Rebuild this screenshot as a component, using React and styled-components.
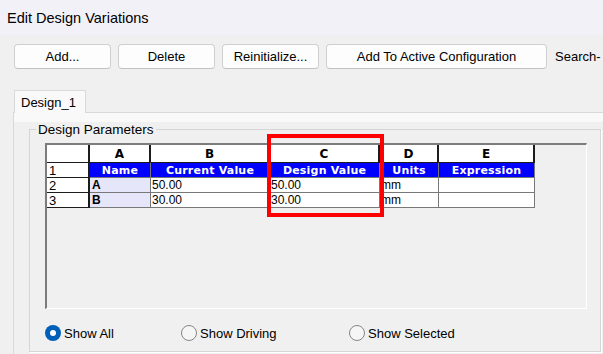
import React from "react";
import styled, { createGlobalStyle } from "styled-components";

const GlobalStyle = createGlobalStyle`
  html, body {
    margin: 0;
    padding: 0;
    background: #f0f0f0;
  }
  body {
    font-family: "Liberation Sans", Arial, sans-serif;
    color: #000;
    overflow: hidden;
  }
  * {
    box-sizing: border-box;
  }
`;

const Window = styled.div`
  width: 603px;
  height: 354px;
  background: #f0f0f0;
  overflow: hidden;
`;

const TitleBar = styled.div`
  height: 35px;
  background: #f3f1f8;
  display: flex;
  align-items: center;
  padding-left: 7px;
  font-size: 14.5px;
`;

const Toolbar = styled.div`
  display: flex;
  align-items: center;
  gap: 7px;
  padding: 9px 0 0 14px;
  white-space: nowrap;
`;

const Button = styled.button`
  width: ${(p) => p.$w}px;
  height: 25px;
  padding: 0;
  background: #fdfdfd;
  border: 1px solid #d0d0d0;
  border-bottom-color: #c2c2c2;
  border-radius: 4px;
  font-family: "Liberation Sans", Arial, sans-serif;
  font-size: 13px;
  color: #000;
`;

const SearchLabel = styled.span`
  margin-left: 1px;
  font-size: 13px;
`;

const TabStrip = styled.div`
  margin-top: 21px;
  padding-left: 14px;
  display: flex;
`;

const Tab = styled.div`
  position: relative;
  z-index: 1;
  width: 72px;
  height: 23px;
  margin-bottom: -1px;
  padding-left: 6px;
  display: flex;
  align-items: center;
  background: #f9f9f9;
  border: 1px solid #d9d9d9;
  border-bottom: none;
  font-size: 13px;
`;

const TabPage = styled.div`
  margin-left: 13px;
  padding-top: 9px;
  background: #f9f9f9;
  border-top: 1px solid #d9d9d9;
  border-left: 1px solid #d9d9d9;
`;

const PageBody = styled.div`
  background: #f0f0f0;
  padding-left: 15px;
  height: 240px;
`;

const GroupBox = styled.fieldset`
  margin: 0;
  padding: 0;
  width: 572px;
  border: 1px solid #d5d5d5;
  box-shadow: 1px 1px 0 #ffffff;
  min-inline-size: 0;
`;

const GroupTitle = styled.legend`
  margin-left: 6px;
  padding: 0 2px;
  font-size: 13.5px;
  line-height: 15px;
`;

const GroupContent = styled.div`
  padding: 6px 13px 10px 15px;
`;

const SheetFrame = styled.div`
  position: relative;
  width: 542px;
  height: 166px;
  background: #f0f0f0;
  border-top: 2px solid #7c7c7c;
  border-left: 2px solid #7c7c7c;
  border-right: 1px solid #ffffff;
  border-bottom: 1px solid #ffffff;
`;

const Sheet = styled.div`
  display: grid;
  grid-template-columns: 43px 61px 119px 110px 59px 96px;
  grid-template-rows: 18px 15px 15px 15px;
  width: 488px;
`;

const Cell = styled.div`
  display: flex;
  align-items: center;
  overflow: hidden;
  white-space: nowrap;
  padding-left: 1px;
  font-size: 12px;
  line-height: 1;
  background: #ffffff;
  border-right: 1px solid #787878;
  border-bottom: 1px solid #787878;
`;

const HeadCell = styled(Cell)`
  justify-content: ${(p) => (p.$left ? "flex-start" : "center")};
  padding-left: ${(p) => (p.$left ? "2px" : "0")};
  font-family: ${(p) =>
    p.$left ? '"Liberation Sans", Arial, sans-serif' : '"DejaVu Sans", sans-serif'};
  font-weight: ${(p) => (p.$left ? 400 : 700)};
  font-size: ${(p) => (p.$left ? "13px" : "12px")};
  border-right: 2px solid #1c1c1c;
  border-bottom: 1px solid #1c1c1c;
`;

const TitleCell = styled(Cell)`
  justify-content: center;
  padding-left: 0;
  background: #0000ff;
  color: #ffffff;
  font-family: "DejaVu Sans", sans-serif;
  font-weight: 700;
  font-size: 11px;
  letter-spacing: 0.2px;
`;

const NameCell = styled(Cell)`
  background: #e6e6fa;
  font-weight: 700;
  padding-left: 2px;
`;

const Highlight = styled.div`
  position: absolute;
  left: 220px;
  top: -11px;
  width: 117px;
  height: 83px;
  border: 4px solid #ff0000;
  pointer-events: none;
`;

const RadioRow = styled.div`
  display: flex;
  align-items: center;
  height: 16px;
  margin-top: 16px;
`;

const RadioItem = styled.label`
  display: flex;
  align-items: center;
  gap: 3px;
  width: ${(p) => (p.$w ? `${p.$w}px` : "auto")};
  font-size: 13px;
`;

const RadioDot = styled.span`
  position: relative;
  width: 16px;
  height: 16px;
  border-radius: 50%;
  background: ${(p) => (p.$on ? "#005fb8" : "#f6f6f6")};
  border: ${(p) => (p.$on ? "none" : "1px solid #858585")};
  &::after {
    content: "";
    display: ${(p) => (p.$on ? "block" : "none")};
    position: absolute;
    left: 5px;
    top: 5px;
    width: 6px;
    height: 6px;
    border-radius: 50%;
    background: #ffffff;
  }
`;

const columns = ["A", "B", "C", "D", "E"];
const titles = ["Name", "Current Value", "Design Value", "Units", "Expression"];
const rows = [
  { name: "A", current: "50.00", design: "50.00", units: "mm", expr: "" },
  { name: "B", current: "30.00", design: "30.00", units: "mm", expr: "" },
];

export default function App() {
  return (
    <Window>
      <GlobalStyle />
      <TitleBar>Edit Design Variations</TitleBar>
      <Toolbar>
        <Button $w={97}>Add...</Button>
        <Button $w={97}>Delete</Button>
        <Button $w={97}>Reinitialize...</Button>
        <Button $w={221}>Add To Active Configuration</Button>
        <SearchLabel>Search-</SearchLabel>
      </Toolbar>
      <TabStrip>
        <Tab>Design_1</Tab>
      </TabStrip>
      <TabPage>
        <PageBody>
          <GroupBox>
            <GroupTitle>Design Parameters</GroupTitle>
            <GroupContent>
              <SheetFrame>
                <Sheet>
                  <HeadCell />
                  {columns.map((c) => (
                    <HeadCell key={c}>{c}</HeadCell>
                  ))}
                  <HeadCell $left>1</HeadCell>
                  {titles.map((t) => (
                    <TitleCell key={t}>{t}</TitleCell>
                  ))}
                  {rows.map((r, i) => (
                    <React.Fragment key={r.name}>
                      <HeadCell $left>{i + 2}</HeadCell>
                      <NameCell>{r.name}</NameCell>
                      <Cell>{r.current}</Cell>
                      <Cell>{r.design}</Cell>
                      <Cell>{r.units}</Cell>
                      <Cell>{r.expr}</Cell>
                    </React.Fragment>
                  ))}
                </Sheet>
                <Highlight />
              </SheetFrame>
              <RadioRow>
                <RadioItem $w={136}>
                  <RadioDot $on />
                  Show All
                </RadioItem>
                <RadioItem $w={168}>
                  <RadioDot />
                  Show Driving
                </RadioItem>
                <RadioItem>
                  <RadioDot />
                  Show Selected
                </RadioItem>
              </RadioRow>
            </GroupContent>
          </GroupBox>
        </PageBody>
      </TabPage>
    </Window>
  );
}
